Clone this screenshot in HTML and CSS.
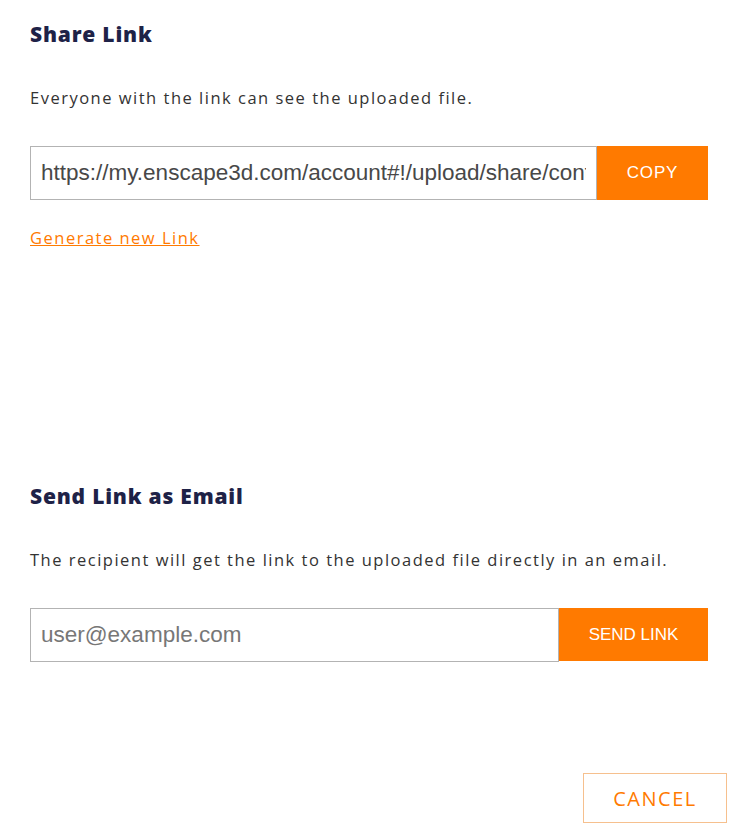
FILE: index.html
```html
<!DOCTYPE html>
<html lang="en">
<head>
    <meta charset="UTF-8">
    <meta name="viewport" content="width=device-width, initial-scale=1.0">
    <title>Share Link</title>
    <link rel="stylesheet" href="styles.css">
</head>
<body>
    <div class="dialog">
        <section class="share">
            <h2>Share Link</h2>
            <p>Everyone with the link can see the uploaded file.</p>
            <div class="row">
                <input type="text" class="field" value="https://my.enscape3d.com/account#!/upload/share/content/8f3a2c" readonly>
                <button class="btn copy">COPY</button>
            </div>
            <a href="#" class="new-link">Generate new Link</a>
        </section>

        <section class="email">
            <h2>Send Link as Email</h2>
            <p>The recipient will get the link to the uploaded file directly in an email.</p>
            <div class="row">
                <input type="email" class="field" placeholder="user@example.com">
                <button class="btn send">SEND LINK</button>
            </div>
        </section>

        <div class="footer">
            <button class="cancel">CANCEL</button>
        </div>
    </div>
</body>
</html>
```

FILE: styles.css
```css
body {
    font-family: "Open Sans", sans-serif;
    background-color: #ffffff;
    margin: 0;
    padding: 0;
    color: #333;
}
.dialog {
    padding: 20px 19px 9px 30px;
}
.share,
.email {
    width: 678px;
}
.email {
    margin-top: 232px;
}
h2 {
    margin: 0;
    font-size: 21px;
    line-height: 28px;
    font-weight: 800;
    letter-spacing: 0.8px;
    color: #1e2247;
}
p {
    margin: 38px 0 0;
    font-size: 16.5px;
    line-height: 24px;
    letter-spacing: 1.5px;
    color: #333;
}
.row {
    display: flex;
    margin-top: 36px;
    height: 54px;
}
.field {
    flex: 1;
    min-width: 0;
    box-sizing: border-box;
    height: 54px;
    border: 1px solid #b3b3b3;
    border-radius: 0;
    padding: 0 10px;
    font-family: "Liberation Sans", Arial, sans-serif;
    font-size: 22.5px;
    color: #484848;
    outline: none;
}
.field::placeholder {
    color: #777;
}
.btn {
    border: none;
    background-color: #ff7a00;
    color: white;
    font-family: "Liberation Sans", Arial, sans-serif;
    font-size: 17px;
    cursor: pointer;
    padding: 0;
}
.copy {
    width: 111px;
    letter-spacing: 0.8px;
}
.send {
    width: 149px;
    height: 53px;
}
.new-link {
    display: block;
    margin-top: 26px;
    font-size: 16.5px;
    line-height: 24px;
    letter-spacing: 1.5px;
    color: #ff7a00;
    text-decoration: underline;
    width: max-content;
}
.footer {
    display: flex;
    justify-content: flex-end;
    margin-top: 111px;
}
.cancel {
    width: 144px;
    height: 50px;
    background: white;
    border: 1px solid #f6c08e;
    color: #ff7a00;
    font-family: "Open Sans", sans-serif;
    font-size: 20px;
    letter-spacing: 1.5px;
    cursor: pointer;
}
```
